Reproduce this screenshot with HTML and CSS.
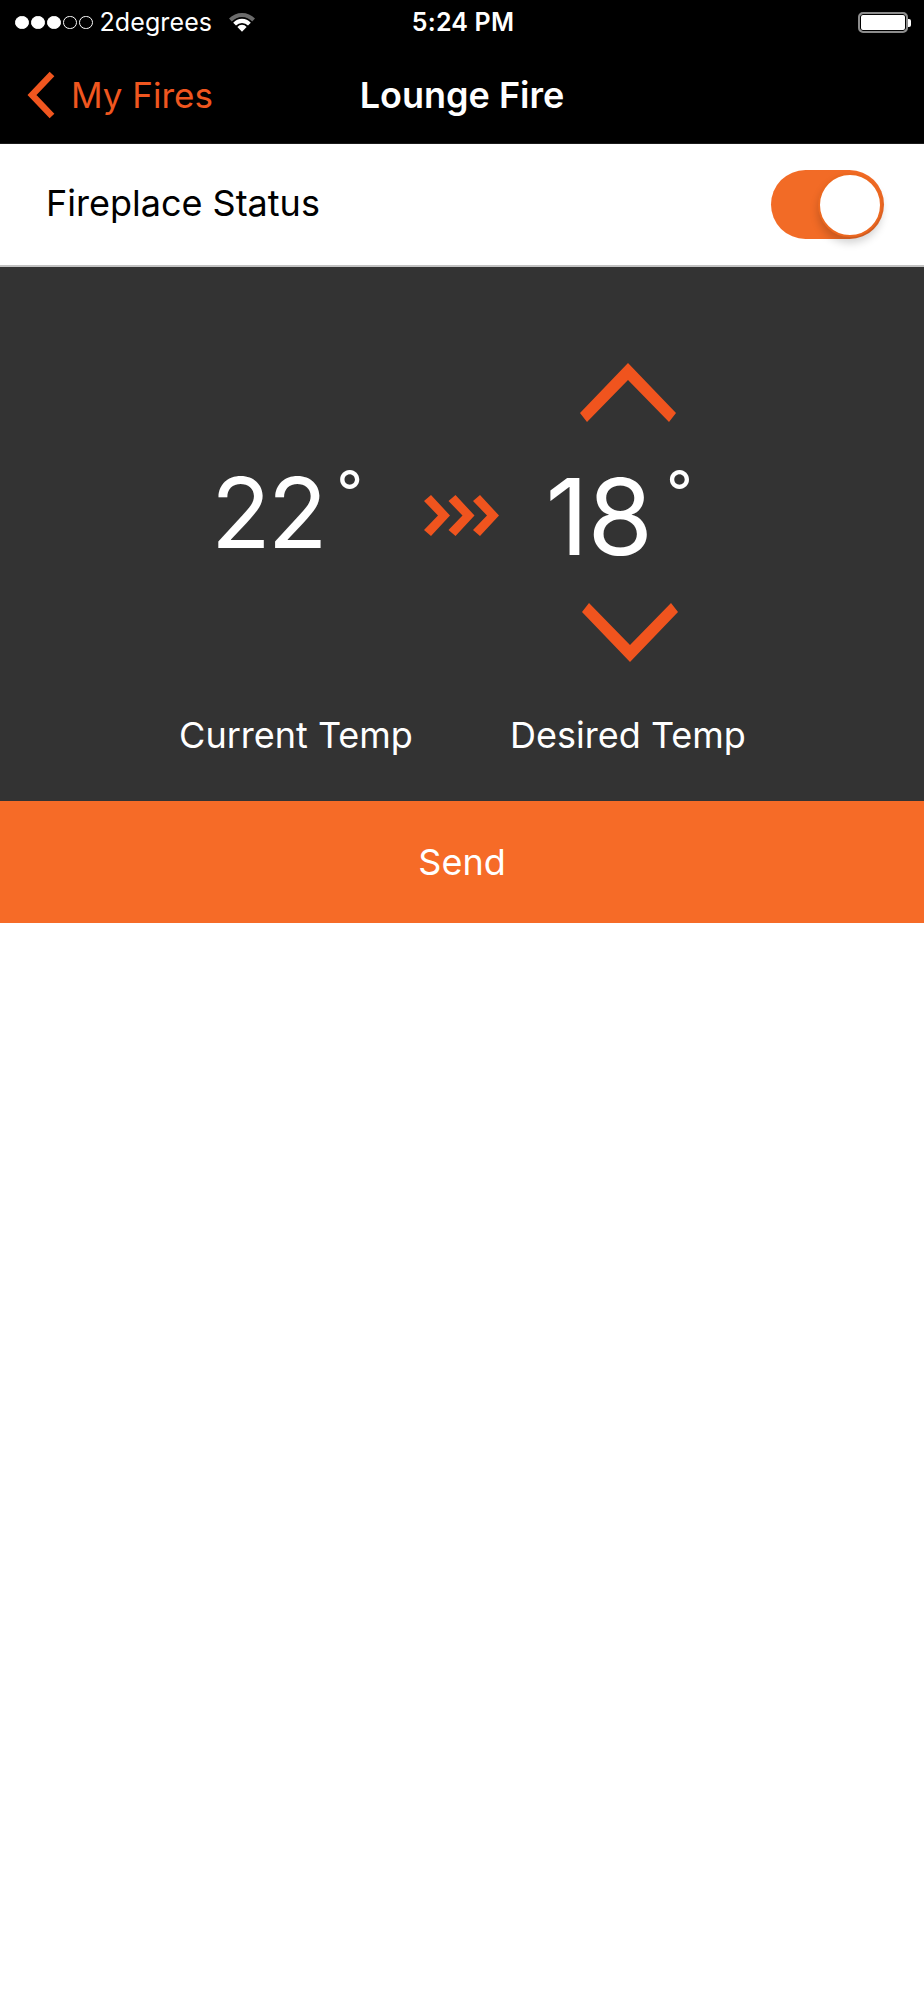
FILE: index.html
```html
<!DOCTYPE html>
<html>
<head>
  <meta charset="utf-8">
  <title>Lounge Fire</title>
  <link rel="stylesheet" href="styles.css">
</head>
<body>
  <div class="status-bar">
    <div class="carrier">
      <span class="signal">
        <i class="dot on"></i><i class="dot on"></i><i class="dot on"></i><i class="dot"></i><i class="dot"></i>
      </span>
      <span class="carrier-name">2degrees</span>
      <svg class="wifi" width="28" height="21" viewBox="0 0 28 21">
        <path d="M1 7.5 A18 18 0 0 1 27 7.5 L24.2 10.4 A14 14 0 0 0 3.8 10.4 Z" fill="#6b6b6b"/>
        <path d="M5.2 11.7 A12 12 0 0 1 22.8 11.7 L20 14.6 A8 8 0 0 0 8 14.6 Z" fill="#fff"/>
        <path d="M9.4 16 A6 6 0 0 1 18.6 16 L14 20.8 Z" fill="#fff"/>
      </svg>
    </div>
    <div class="clock">5:24 PM</div>
    <div class="battery"><span class="battery-body"></span><span class="battery-tip"></span></div>
  </div>

  <div class="nav-bar">
    <a class="back">
      <svg width="30" height="48" viewBox="0 0 30 48">
        <polyline points="26,3 6,24 26,45" fill="none" stroke="#f0561f" stroke-width="6.5"/>
      </svg>
      <span>My Fires</span>
    </a>
    <h1 class="nav-title">Lounge Fire</h1>
  </div>

  <div class="status-row">
    <span class="status-label">Fireplace Status</span>
    <div class="toggle on"><span class="knob"></span></div>
  </div>

  <div class="dial">
    <div class="step step-up">
      <svg width="96" height="60" viewBox="0 0 96 60">
        <polygon points="0,50 48,0 96,50 89,59 48,17 7,59" fill="#f0541e"/>
      </svg>
    </div>

    <div class="temp temp-current">
      <span class="temp-value">22</span><span class="temp-deg">°</span>
    </div>
    <div class="flow">
      <svg width="76" height="41" viewBox="0 0 76 41">
        <polygon points="0,6 7,0 26,20.5 7,41 0,35 14,20.5" fill="#f0541e"/>
        <polygon points="24.5,6 31.5,0 50.5,20.5 31.5,41 24.5,35 38.5,20.5" fill="#f0541e"/>
        <polygon points="49,6 56,0 75,20.5 56,41 49,35 63,20.5" fill="#f0541e"/>
      </svg>
    </div>
    <div class="temp temp-desired">
      <span class="temp-value">18</span><span class="temp-deg">°</span>
    </div>

    <div class="step step-down">
      <svg width="96" height="60" viewBox="0 0 96 60">
        <polygon points="0,9 7,0 48,42 89,0 96,9 48,59" fill="#f0541e"/>
      </svg>
    </div>

    <div class="dial-label label-current">Current Temp</div>
    <div class="dial-label label-desired">Desired Temp</div>
  </div>

  <button class="send">Send</button>
</body>
</html>
```

FILE: styles.css
```css
html, body {
  margin: 0;
  padding: 0;
  background: #fff;
}
body {
  width: 924px;
  font-family: Inter, "Liberation Sans", sans-serif;
  -webkit-font-smoothing: antialiased;
}

/* status bar */
.status-bar {
  height: 45px;
  background: #000;
  color: #fff;
  display: grid;
  grid-template-columns: 1fr auto 1fr;
  align-items: center;
  padding: 0 13px 0 15px;
  font-size: 25px;
}
.carrier {
  display: flex;
  align-items: center;
}
.signal {
  display: flex;
  gap: 2.5px;
  margin-right: 7px;
}
.dot {
  width: 11.5px;
  height: 11.5px;
  border: 1px solid #fff;
  border-radius: 50%;
  box-sizing: content-box;
}
.dot.on {
  background: #fff;
}
.carrier-name {
  letter-spacing: 0.1px;
  margin-top: -2px;
}
.wifi {
  margin-left: 16px;
  margin-top: -2px;
}
.clock {
  font-weight: 600;
  letter-spacing: 0.2px;
  margin-top: -2px;
}
.battery {
  justify-self: end;
  display: flex;
  align-items: center;
}
.battery-body {
  width: 46px;
  height: 17px;
  background: #fff;
  border: 2px solid #8c8c8c;
  border-radius: 5px;
  box-shadow: inset 0 0 0 1px #000;
}
.battery-tip {
  width: 3px;
  height: 8px;
  background: #fff;
  border-radius: 0 2px 2px 0;
}

/* nav bar */
.nav-bar {
  height: 98px;
  background: #000;
  position: relative;
  display: flex;
  align-items: center;
  justify-content: center;
}
.back {
  position: absolute;
  left: 26px;
  top: 26px;
  display: flex;
  align-items: center;
  color: #f0561f;
  font-size: 35px;
}
.back svg {
  margin-right: 15px;
}
.nav-title {
  margin: 0;
  color: #fff;
  font-size: 36px;
  font-weight: 600;
  margin-top: 2px;
}

/* fireplace status */
.status-row {
  height: 124px;
  box-sizing: border-box;
  border-top: 1px solid #1a1a1a;
  border-bottom: 2px solid #c2c2c2;
  display: flex;
  align-items: center;
  justify-content: space-between;
  padding: 0 40px 0 46px;
}
.status-label {
  font-size: 36px;
  color: #000;
  margin-top: -3px;
}
.toggle {
  width: 113px;
  height: 69px;
  border-radius: 35px;
  background: #f26b26;
  display: flex;
  align-items: center;
  justify-content: flex-end;
  padding: 0 2px;
  box-sizing: border-box;
}
.knob {
  width: 60px;
  height: 60px;
  border-radius: 50%;
  background: #fff;
  border: 2.5px solid #ec6820;
  box-shadow: 0 6px 8px rgba(0, 0, 0, 0.18);
}

/* dial */
.dial {
  height: 534px;
  box-sizing: border-box;
  background: #333333;
  color: #fff;
  display: grid;
  grid-template-columns: 256px 76px 256px;
  grid-template-rows: 60px 180px 59px auto;
  justify-content: center;
  padding-top: 96px;
}
.step {
  grid-column: 3;
  display: flex;
  justify-content: center;
}
.step-up { grid-row: 1; }
.step-down { grid-row: 3; margin-left: 4px; }
.temp {
  grid-row: 2;
  display: flex;
  justify-content: center;
  align-items: flex-start;
  padding-top: 41px;
  padding-right: 18px;
}
.temp-current { grid-column: 1; }
.temp-desired { grid-column: 3; }
.temp-value {
  font-size: 98px;
  font-weight: 400;
  line-height: 1;
  letter-spacing: -3px;
}
.temp-desired .temp-value {
  font-size: 106px;
  letter-spacing: -1px;
}
.temp-current .temp-deg {
  margin-left: 12px;
}
.temp-deg {
  font-size: 58px;
  line-height: 1;
  margin-left: 14px;
  margin-top: -2px;
}
.flow {
  grid-column: 2;
  grid-row: 2;
  display: flex;
  align-items: center;
  justify-content: center;
}
.flow svg {
  margin-top: 5px;
}
.dial-label {
  grid-row: 4;
  font-size: 36px;
  text-align: center;
  margin-top: 51px;
}
.label-current { grid-column: 1; }
.label-desired { grid-column: 3; }

/* send */
.send {
  display: block;
  width: 100%;
  height: 122px;
  border: 0;
  background: #f66b27;
  color: #fff;
  font-family: inherit;
  font-size: 36px;
  padding: 0;
}
```
